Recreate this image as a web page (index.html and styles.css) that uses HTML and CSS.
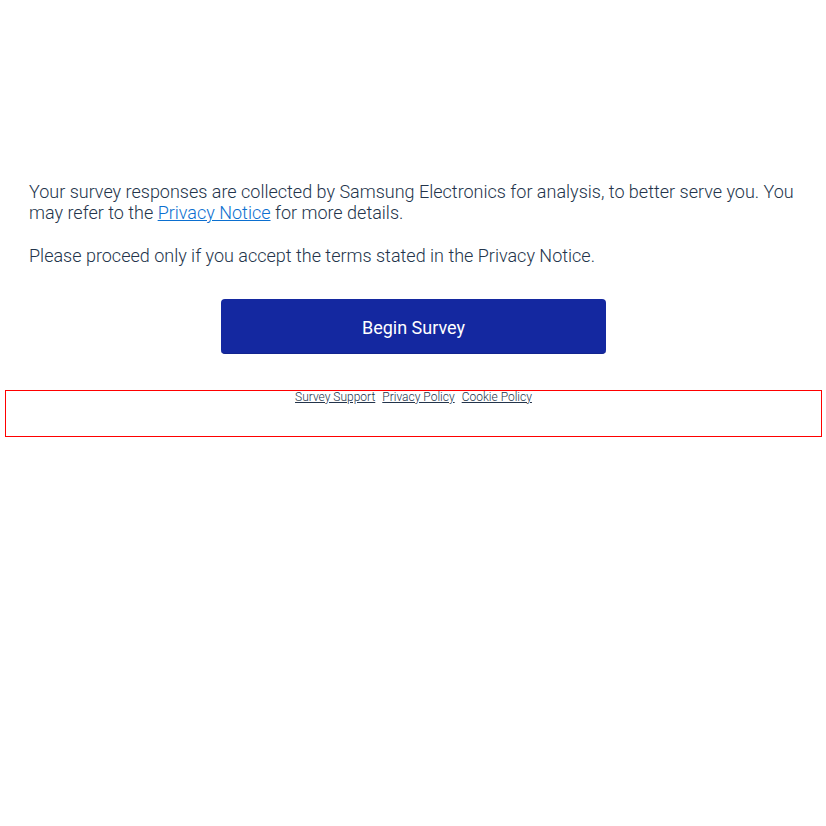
FILE: index.html
```html
<!DOCTYPE html>
<html lang="en">
<head>
<meta charset="utf-8">
<meta name="viewport" content="width=device-width, initial-scale=1">
<title>Survey</title>
<link rel="stylesheet" href="styles.css">
</head>
<body>
<main class="survey">
  <p class="notice">Your survey responses are collected by Samsung Electronics for analysis, to better serve you. You may refer to the <a class="notice-link" href="#privacy-notice">Privacy Notice</a> for more details.</p>
  <p class="notice">Please proceed only if you accept the terms stated in the Privacy Notice.</p>
  <button class="begin" type="button">Begin Survey</button>
</main>
<footer class="footer">
  <a href="#support">Survey Support</a>
  <a href="#privacy">Privacy Policy</a>
  <a href="#cookies">Cookie Policy</a>
</footer>
</body>
</html>
```
FILE: styles.css
```css
* {
  box-sizing: border-box;
}

body {
  margin: 0;
  padding: 181px 4px 0 5px;
  background: #fff;
  color: #23344b;
  font-family: Roboto, sans-serif;
}

.survey {
  padding: 0 24px;
}

.notice {
  margin: 0 0 22px;
  font-weight: 300;
  font-size: 18px;
  line-height: 21px;
}

.notice-link {
  color: #0b6fd0;
}

.begin {
  display: block;
  width: 50%;
  height: 55px;
  margin: 33px auto 36px;
  padding: 3px 0 0;
  border: 0;
  border-bottom: 1px solid #12248f;
  border-radius: 4px;
  background: #1428a0;
  color: #fff;
  font-family: Roboto, sans-serif;
  font-size: 18px;
}

.footer {
  display: flex;
  justify-content: center;
  gap: 7px;
  height: 47px;
  border: 1px solid #ff0000;
  font-weight: 300;
  font-size: 12px;
  line-height: 12px;
}

.footer a {
  color: #23344b;
}
```
